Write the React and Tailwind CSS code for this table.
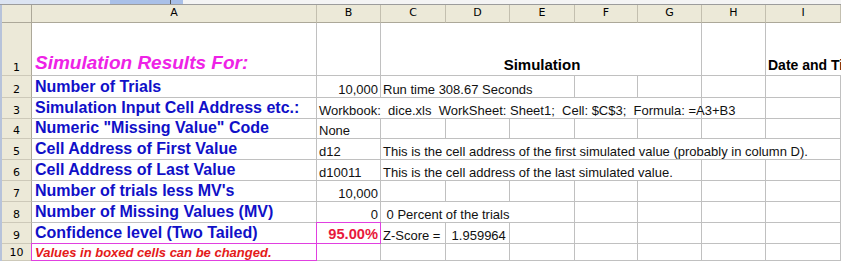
import React from 'react';

// column spans used by merged / overflowing cells
const SPAN = { 1: '', 3: 'col-span-3', 5: 'col-span-5', 6: 'col-span-6', 7: 'col-span-7' };

const Cell = ({ span = 1, right, box, noRight, className = '', children }) => (
  <div
    className={`relative flex items-end min-w-0 whitespace-pre border-b border-[#c0c0c0] ${noRight ? '' : 'border-r'} ${
      right ? 'justify-end pr-[2px]' : 'pl-[2px]'
    } ${SPAN[span]} ${className}`}
  >
    {children}
    {box && <div className="pointer-events-none absolute -inset-px z-10 border border-[#e040e0]" />}
  </div>
);

const RowHead = ({ n }) => (
  <div className="flex items-end justify-center pb-[2px] leading-none bg-[#ece9d8] border-r border-r-[#aca899] border-b border-b-[#cdc9b9] text-[11px] text-black font-['DejaVu_Sans',sans-serif]">
    {n}
  </div>
);

const Label = ({ children }) => (
  <Cell className="pl-[3px] pb-[2px] leading-none text-[16px] font-bold text-[#1010c8]">{children}</Cell>
);

const Data = (props) => <Cell {...props} className={`pb-px leading-none text-[13px] text-[#111] ${props.className || ''}`} />;

const Empty = ({ count }) => Array.from({ length: count }).map((_, i) => <Cell key={i} />);

const columns = ['A', 'B', 'C', 'D', 'E', 'F', 'G', 'H', 'I'];

export default function App() {
  return (
    <div className="w-[841px] h-[261px] overflow-hidden bg-white font-['Liberation_Sans',Arial,sans-serif]">
      {/* toolbar edge */}
      <div className="flex h-[5px] border-b border-[#9c9c9c]">
        <div className="w-[110px] bg-[#dce4f2]" />
        <div className="relative w-[73px] bg-[#a9c0e8]">
          <div className="absolute left-[60px] top-0 h-[4px] w-px bg-[#555]" />
        </div>
        <div className="flex-1 bg-[#f4f4f4]" />
      </div>

      <div className="flex">
        <div className="w-[2px] shrink-0 bg-[#b7c3da]" />
        <div className="grid grid-cols-[30px_285px_64px_65px_64px_65px_63px_64px_64px_75px] grid-rows-[18px_53px_22px_21px_20px_21px_21px_21px_21px_21px_17px]">
          {/* column headers */}
          <div className="bg-[#ece9d8] border-r border-b border-[#aca899]" />
          {columns.map((c) => (
            <div
              key={c}
              className="flex items-center justify-center bg-[#ece9d8] border-r border-r-[#c3bfaf] border-b border-b-[#aca899] text-[11px] text-black font-['DejaVu_Sans',sans-serif]"
            >
              {c}
            </div>
          ))}

          {/* row 1 */}
          <RowHead n="1" />
          <Cell className="pl-[3px] pb-[3px] leading-none text-[19px] font-bold italic text-[#ee22e6]">Simulation Results For:</Cell>
          <Cell />
          <Cell span={5} className="justify-center pb-[3px] leading-none text-[15px] font-bold text-black">Simulation</Cell>
          <Cell />
          <Cell noRight className="pb-[3px] leading-none text-[14px] font-bold text-black overflow-visible">Date and Time</Cell>

          {/* row 2 */}
          <RowHead n="2" />
          <Label>Number of Trials</Label>
          <Data right>10,000</Data>
          <Data span={3}>Run time 308.67 Seconds</Data>
          <Empty count={4} />

          {/* row 3 */}
          <RowHead n="3" />
          <Label>Simulation Input Cell Address etc.:</Label>
          <Data span={6}>{'Workbook:  dice.xls  WorkSheet: Sheet1;  Cell: $C$3;  Formula: =A3+B3'}</Data>
          <Empty count={2} />

          {/* row 4 */}
          <RowHead n="4" />
          <Label>Numeric "Missing Value" Code</Label>
          <Data>None</Data>
          <Empty count={7} />

          {/* row 5 */}
          <RowHead n="5" />
          <Label>Cell Address of First Value</Label>
          <Data>d12</Data>
          <Data span={7}>This is the cell address of the first simulated value (probably in column D).</Data>

          {/* row 6 */}
          <RowHead n="6" />
          <Label>Cell Address of Last Value</Label>
          <Data>d10011</Data>
          <Data span={5}>This is the cell address of the last simulated value.</Data>
          <Empty count={2} />

          {/* row 7 */}
          <RowHead n="7" />
          <Label>Number of trials less MV's</Label>
          <Data right>10,000</Data>
          <Empty count={7} />

          {/* row 8 */}
          <RowHead n="8" />
          <Label>Number of Missing Values (MV)</Label>
          <Data right>0</Data>
          <Data span={3}>{' 0 Percent of the trials'}</Data>
          <Empty count={4} />

          {/* row 9 */}
          <RowHead n="9" />
          <Label>Confidence level (Two Tailed)</Label>
          <Cell right box className="pb-px leading-none text-[14.67px] font-bold text-[#e8183c]">95.00%</Cell>
          <Data>Z-Score =</Data>
          <Data>{' 1.959964'}</Data>
          <Empty count={5} />

          {/* row 10 */}
          <RowHead n="10" />
          <Cell box className="pl-[3px] pb-px leading-none text-[13px] font-bold italic text-[#e41a1a]">Values in boxed cells can be changed.</Cell>
          <Empty count={8} />
        </div>
      </div>
    </div>
  );
}
